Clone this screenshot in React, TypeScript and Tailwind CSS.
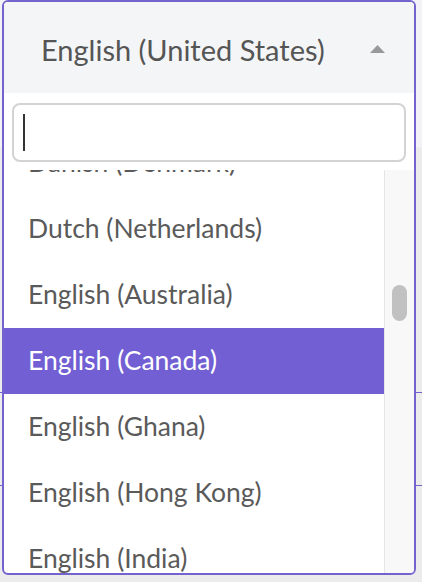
const languages = [
  'Danish (Denmark)',
  'Dutch (Netherlands)',
  'English (Australia)',
  'English (Canada)',
  'English (Ghana)',
  'English (Hong Kong)',
  'English (India)',
];

const selected = 'English (Canada)';

function Backdrop() {
  return (
    <div className="h-[582px] w-full bg-[#ececec]">
      <div className="h-[147px] bg-[#f2f2f7]" />
      <div className="h-[245px]" />
      <div className="h-[93px] border-t border-[#7463cf]" />
      <div className="h-[90px] border-t border-[#7463cf]" />
    </div>
  );
}

export default function App() {
  return (
    <div className="relative h-[582px] w-[422px] overflow-hidden font-['Lato',sans-serif]">
      <Backdrop />

      <div className="absolute left-[2px] top-0 flex h-[575px] w-[414px] flex-col overflow-hidden rounded-[6px] border-2 border-[#7463cf] bg-white">
        <div className="flex h-[91px] shrink-0 items-center justify-between bg-[#f4f5f7] pl-[37px] pr-[29px]">
          <span className="pt-[4px] text-[29px] text-[#555]">English (United States)</span>
          <svg width="15" height="8" viewBox="0 0 15 8" className="mb-[-2px]">
            <path d="M7.5 0 L15 8 L0 8 Z" fill="#999" />
          </svg>
        </div>

        <div className="shrink-0 px-[8px] pt-[10px] pb-[8px]">
          <div className="flex h-[59px] items-center rounded-[8px] border-2 border-[#d3d3d3] bg-white pl-[9px]">
            <span className="h-[37px] w-[2px] bg-[#333]" />
          </div>
        </div>

        <div className="flex min-h-0 flex-1">
          <ul className="min-w-0 flex-1 overflow-hidden">
            {languages.map((lang, i) => (
              <li
                key={lang}
                className={
                  'flex h-[66px] items-center pl-[24px] text-[26.5px] ' +
                  (i === 0 ? 'mt-[-40px] ' : '') +
                  (lang === selected ? 'bg-[#715fd3] text-white' : 'text-[#5a5a5a]')
                }
              >
                {lang}
              </li>
            ))}
          </ul>
          <div className="w-[30px] shrink-0 border-l border-[#e6e6e6] bg-[#f8f8f8] pt-[115px] pl-[7px]">
            <div className="h-[36px] w-[15px] rounded-full bg-[#c1c1c1]" />
          </div>
        </div>
      </div>
    </div>
  );
}
